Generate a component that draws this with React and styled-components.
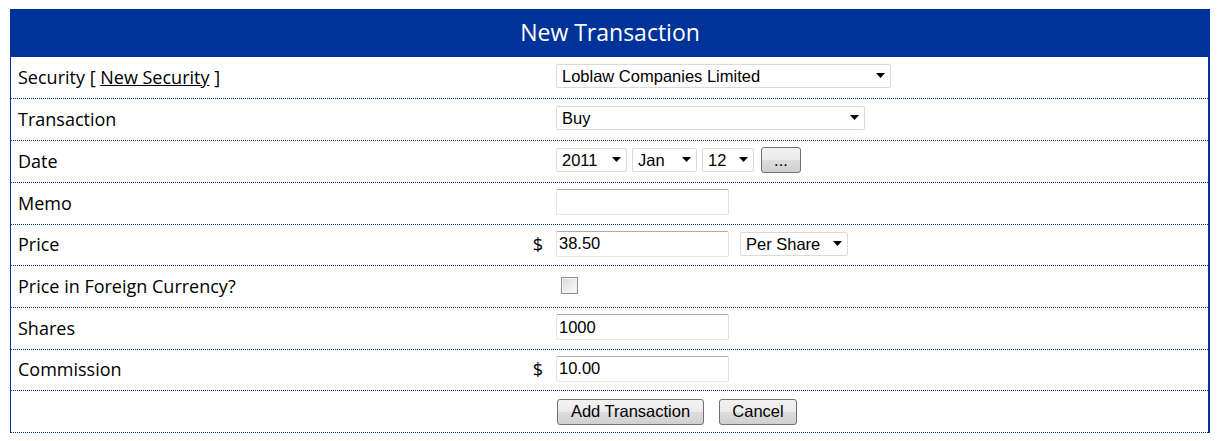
import React, { useState } from 'react';
import styled, { createGlobalStyle } from 'styled-components';

const BLUE = '#003399';

const GlobalStyle = createGlobalStyle`
  html, body {
    margin: 0;
    padding: 0;
    background: #ffffff;
  }
  body {
    font-family: "Open Sans", "DejaVu Sans", sans-serif;
    color: #000;
  }
`;

const Panel = styled.div`
  width: 1200px;
  margin: 9px 0 0 10px;
`;

const Header = styled.div`
  height: 48px;
  padding-bottom: 2px;
  box-sizing: border-box;
  background: ${BLUE};
  color: #fff;
  font-size: 23px;
  display: flex;
  align-items: center;
  justify-content: center;
`;

const Body = styled.div`
  border-left: 1px solid ${BLUE};
  border-right: 2px solid ${BLUE};
`;

const Row = styled.div`
  display: grid;
  grid-template-columns: 537px 1fr;
  box-sizing: border-box;
  height: ${p => p.$h || 42}px;
  border-bottom: 1px dotted ${BLUE};
`;

const Label = styled.div`
  display: flex;
  align-items: center;
  justify-content: space-between;
  padding: 0 5px 2px 7px;
  font-size: 18px;
`;

const Link = styled.a`
  color: #000;
  text-decoration: underline;
  cursor: pointer;
`;

const Controls = styled.div`
  display: flex;
  align-items: center;
  gap: ${p => p.$gap || 5}px;
  padding: 0 0 ${p => (p.$flat ? 0 : 3)}px 8px;
`;

const SelectWrap = styled.div`
  position: relative;
  display: inline-flex;
  width: ${p => p.$w}px;
  height: 24px;
`;

const Select = styled.select`
  appearance: none;
  width: 100%;
  height: 100%;
  box-sizing: border-box;
  border: 1px solid #dadada;
  border-radius: 2px;
  background: #fff;
  padding: 0 18px 0 5px;
  font-family: "Liberation Sans", Arial, sans-serif;
  font-size: 16.5px;
  color: #000;
  outline: none;
`;

const Arrow = styled.svg`
  position: absolute;
  right: 6px;
  top: 9px;
  pointer-events: none;
`;

const TextInput = styled.input`
  width: 173px;
  height: 26px;
  box-sizing: border-box;
  border: 1px solid;
  border-color: #abadb3 #dbdfe6 #e3e9ef #e2e3ea;
  border-radius: 2px;
  padding: 0 2px;
  font-family: "Liberation Sans", Arial, sans-serif;
  font-size: 16.5px;
  color: #000;
  outline: none;
`;

const Checkbox = styled.input`
  appearance: none;
  margin: 0 0 0 5px;
  width: 17px;
  height: 17px;
  border: 1px solid #8f8f8f;
  background: linear-gradient(135deg, #d6d6d6 0%, #f0f0f0 60%, #fbfbfb 100%);
  box-shadow: inset 0 0 0 1px #f2f2f2;
`;

const Button = styled.button`
  height: 26px;
  box-sizing: border-box;
  padding: 0 ${p => p.$pad || 12}px;
  margin-left: ${p => p.$ml || 0}px;
  border: 1px solid #707070;
  border-radius: 3px;
  background: linear-gradient(#f2f2f2 0%, #ebebeb 50%, #dddddd 51%, #cfcfcf 100%);
  font-family: "Liberation Sans", Arial, sans-serif;
  font-size: 16.5px;
  color: #000;
`;

function Dropdown({ width, options, value, onChange }) {
  return (
    <SelectWrap $w={width}>
      <Select value={value} onChange={e => onChange(e.target.value)}>
        {options.map(o => <option key={o}>{o}</option>)}
      </Select>
      <Arrow width="9" height="5" viewBox="0 0 9 5">
        <path d="M0 0 H9 L4.5 5 Z" fill="#000" />
      </Arrow>
    </SelectWrap>
  );
}

export default function App() {
  const [security, setSecurity] = useState('Loblaw Companies Limited');
  const [kind, setKind] = useState('Buy');
  const [year, setYear] = useState('2011');
  const [month, setMonth] = useState('Jan');
  const [day, setDay] = useState('12');
  const [memo, setMemo] = useState('');
  const [price, setPrice] = useState('38.50');
  const [basis, setBasis] = useState('Per Share');
  const [foreign, setForeign] = useState(false);
  const [shares, setShares] = useState('1000');
  const [commission, setCommission] = useState('10.00');

  return (
    <>
      <GlobalStyle />
      <Panel>
        <Header>New Transaction</Header>
        <Body>
          <Row>
            <Label><span>Security [ <Link>New Security</Link> ]</span></Label>
            <Controls>
              <Dropdown width={335} value={security} onChange={setSecurity}
                options={['Loblaw Companies Limited', 'Royal Bank of Canada', 'Suncor Energy Inc.']} />
            </Controls>
          </Row>
          <Row>
            <Label>Transaction</Label>
            <Controls>
              <Dropdown width={309} value={kind} onChange={setKind}
                options={['Buy', 'Sell', 'Dividend', 'Split']} />
            </Controls>
          </Row>
          <Row>
            <Label>Date</Label>
            <Controls>
              <Dropdown width={71} value={year} onChange={setYear} options={['2009', '2010', '2011', '2012']} />
              <Dropdown width={65} value={month} onChange={setMonth} options={['Jan', 'Feb', 'Mar', 'Apr']} />
              <Dropdown width={52} value={day} onChange={setDay} options={['10', '11', '12', '13']} />
              <Button $pad={10} $ml={2} style={{ width: 40 }}>...</Button>
            </Controls>
          </Row>
          <Row>
            <Label>Memo</Label>
            <Controls>
              <TextInput value={memo} onChange={e => setMemo(e.target.value)} />
            </Controls>
          </Row>
          <Row $h={41}>
            <Label><span>Price</span><span>$</span></Label>
            <Controls $gap={11}>
              <TextInput value={price} onChange={e => setPrice(e.target.value)} />
              <Dropdown width={108} value={basis} onChange={setBasis} options={['Per Share', 'Total']} />
            </Controls>
          </Row>
          <Row>
            <Label>Price in Foreign Currency?</Label>
            <Controls>
              <Checkbox type="checkbox" checked={foreign} onChange={e => setForeign(e.target.checked)} />
            </Controls>
          </Row>
          <Row>
            <Label>Shares</Label>
            <Controls>
              <TextInput value={shares} onChange={e => setShares(e.target.value)} />
            </Controls>
          </Row>
          <Row $h={41}>
            <Label><span>Commission</span><span>$</span></Label>
            <Controls>
              <TextInput value={commission} onChange={e => setCommission(e.target.value)} />
            </Controls>
          </Row>
          <Row>
            <Label />
            <Controls $gap={15} $flat>
              <Button $ml={1} style={{ width: 147 }}>Add Transaction</Button>
              <Button style={{ width: 78 }}>Cancel</Button>
            </Controls>
          </Row>
        </Body>
      </Panel>
    </>
  );
}
